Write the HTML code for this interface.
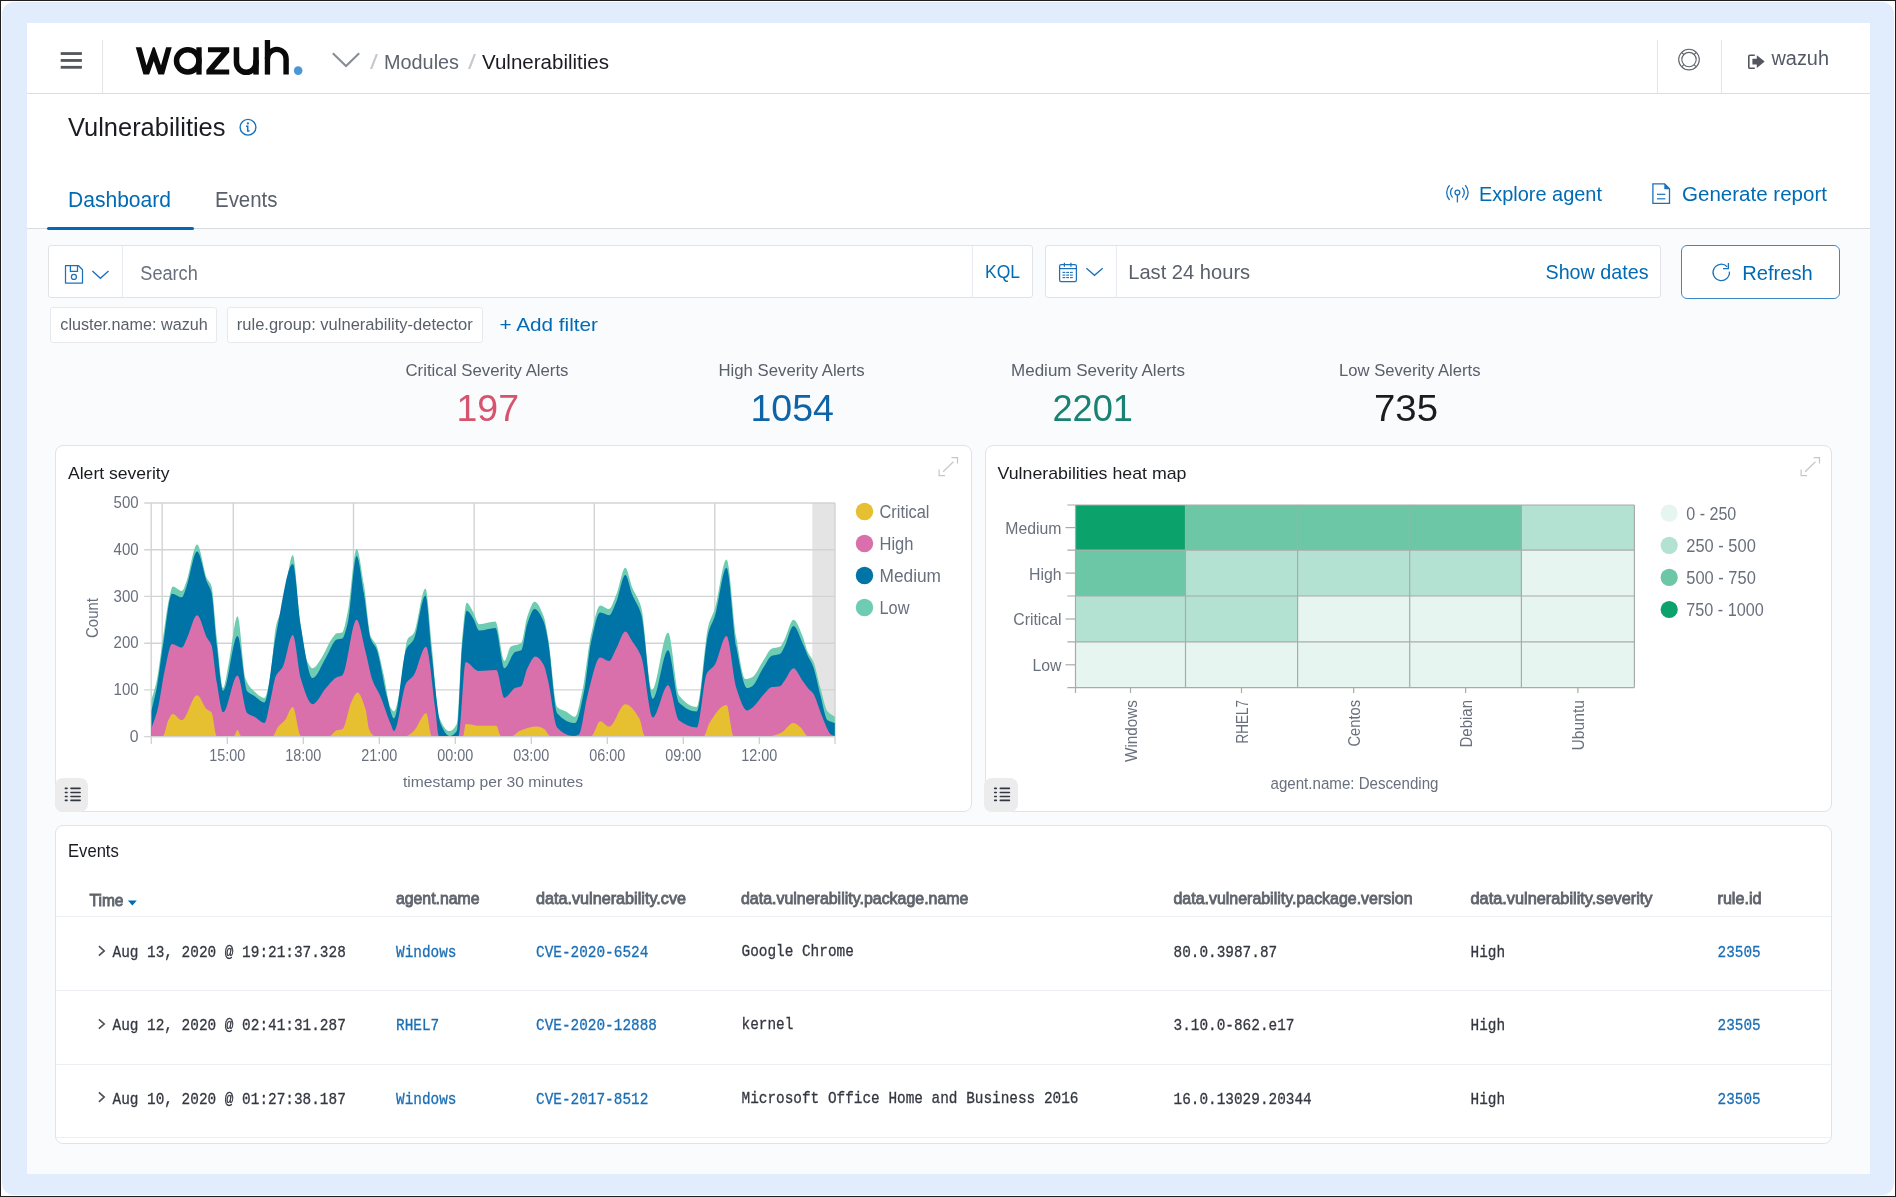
<!DOCTYPE html>
<html><head><meta charset="utf-8"><title>Wazuh - Vulnerabilities</title>
<style>
html,body{margin:0;padding:0;}
body{width:1896px;height:1197px;overflow:hidden;position:relative;background:#fff;font-family:"Liberation Sans", sans-serif;}
#L>div{position:absolute;}
svg{position:absolute;left:0;top:0;will-change:transform;}
</style></head><body>
<div id="L">
<div style="left:0px;top:0px;width:1896px;height:1197px;background:#ffffff;border:1px solid #1f1f1f;box-sizing:border-box;"></div>
<div style="left:2px;top:2px;width:1892px;height:1193px;background:#e1edfd;border-radius:12px;"></div>
<div style="left:27px;top:23px;width:1843px;height:1151px;background:#ffffff;"></div>
<div style="left:27px;top:229px;width:1843px;height:945px;background:#fafbfd;"></div>
<div style="left:27px;top:93px;width:1843px;height:1px;background:#dcdee1;"></div>
<div style="left:102px;top:40px;width:1px;height:53px;background:#e3e5e8;"></div>
<div style="left:1657px;top:40px;width:1px;height:53px;background:#e3e5e8;"></div>
<div style="left:1721px;top:40px;width:1px;height:53px;background:#e3e5e8;"></div>
<div style="left:27px;top:228px;width:1843px;height:1px;background:#d9dbde;"></div>
<div style="left:47px;top:227px;width:147px;height:3px;background:#006bb4;border-radius:2px;"></div>
<div style="left:48px;top:245px;width:985px;height:53px;background:#ffffff;border:1px solid #e1e3e6;box-sizing:border-box;border-radius:3px;"></div>
<div style="left:122px;top:246px;width:1px;height:51px;background:#e8ebef;"></div>
<div style="left:972px;top:246px;width:1px;height:51px;background:#e8ebef;"></div>
<div style="left:1045px;top:245px;width:616px;height:53px;background:#ffffff;border:1px solid #e1e3e6;box-sizing:border-box;border-radius:3px;"></div>
<div style="left:1116px;top:246px;width:1px;height:51px;background:#e8ebef;"></div>
<div style="left:1681px;top:245px;width:159px;height:54px;background:#ffffff;border:1.5px solid #3f87c6;box-sizing:border-box;border-radius:6px;"></div>
<div style="left:50px;top:307px;width:167px;height:36px;background:#ffffff;border:1px solid #e6e9ee;box-sizing:border-box;border-radius:3px;"></div>
<div style="left:227px;top:307px;width:256px;height:36px;background:#ffffff;border:1px solid #e6e9ee;box-sizing:border-box;border-radius:3px;"></div>
<div style="left:55px;top:445px;width:917px;height:367px;background:#ffffff;border:1px solid #dfe4ec;box-sizing:border-box;border-radius:8px;"></div>
<div style="left:985px;top:445px;width:847px;height:367px;background:#ffffff;border:1px solid #dfe4ec;box-sizing:border-box;border-radius:8px;"></div>
<div style="left:55px;top:825px;width:1777px;height:319px;background:#ffffff;border:1px solid #dfe4ec;box-sizing:border-box;border-radius:8px;"></div>
<div style="left:55px;top:778px;width:33px;height:34px;background:#ececed;border-radius:8px 8px 8px 8px;"></div>
<div style="left:984px;top:778px;width:34px;height:34px;background:#ececed;border-radius:8px 8px 8px 8px;"></div>
<div style="left:56px;top:916px;width:1775px;height:1px;background:#eceff3;"></div>
<div style="left:56px;top:990px;width:1775px;height:1px;background:#eceff3;"></div>
<div style="left:56px;top:1064px;width:1775px;height:1px;background:#eceff3;"></div>
<div style="left:56px;top:1137px;width:1775px;height:1px;background:#eceff3;"></div>
</div>
<svg font-family='"Liberation Sans", sans-serif' width="1896" height="1197" viewBox="0 0 1896 1197">
<text x="384" y="69.4" font-size="20" fill="#5e646f" textLength="75" lengthAdjust="spacingAndGlyphs">Modules</text>
<text x="482" y="69.4" font-size="20" fill="#1a1c21" textLength="127" lengthAdjust="spacingAndGlyphs">Vulnerabilities</text>
<text x="370" y="69.4" font-size="20" fill="#c5c9cf" textLength="8" lengthAdjust="spacingAndGlyphs">/</text>
<text x="468" y="69.4" font-size="20" fill="#c5c9cf" textLength="8" lengthAdjust="spacingAndGlyphs">/</text>
<text x="1771.5" y="65.4" font-size="20" fill="#535966" textLength="57.5" lengthAdjust="spacingAndGlyphs">wazuh</text>
<text x="68" y="136.4" font-size="25.5" fill="#1a1c21" textLength="157.5" lengthAdjust="spacingAndGlyphs">Vulnerabilities</text>
<text x="68" y="207.2" font-size="22" fill="#006bb4" textLength="103" lengthAdjust="spacingAndGlyphs">Dashboard</text>
<text x="215" y="207.2" font-size="22" fill="#5a606b" textLength="62.5" lengthAdjust="spacingAndGlyphs">Events</text>
<text x="1479" y="200.9" font-size="20.5" fill="#006bb4" textLength="123" lengthAdjust="spacingAndGlyphs">Explore agent</text>
<text x="1682" y="200.9" font-size="20.5" fill="#006bb4" textLength="145" lengthAdjust="spacingAndGlyphs">Generate report</text>
<text x="140.3" y="280.2" font-size="19.5" fill="#69707d" textLength="57.5" lengthAdjust="spacingAndGlyphs">Search</text>
<text x="985" y="278.4" font-size="19" fill="#006bb4" textLength="35" lengthAdjust="spacingAndGlyphs">KQL</text>
<text x="1128.2" y="279.4" font-size="19.8" fill="#5a606b" textLength="122" lengthAdjust="spacingAndGlyphs">Last 24 hours</text>
<text x="1545.5" y="279.4" font-size="19.8" fill="#006bb4" textLength="103" lengthAdjust="spacingAndGlyphs">Show dates</text>
<text x="1742.2" y="279.9" font-size="20.3" fill="#006bb4" textLength="70.5" lengthAdjust="spacingAndGlyphs">Refresh</text>
<text x="60.3" y="330.4" font-size="16.3" fill="#5a606b" textLength="147.5" lengthAdjust="spacingAndGlyphs">cluster.name: wazuh</text>
<text x="236.8" y="330.4" font-size="16.3" fill="#5a606b" textLength="236" lengthAdjust="spacingAndGlyphs">rule.group: vulnerability-detector</text>
<text x="499.5" y="331.4" font-size="19" fill="#006bb4" textLength="98.5" lengthAdjust="spacingAndGlyphs">+ Add filter</text>
<text x="405.5" y="376.0" font-size="17" fill="#5a606b" textLength="163" lengthAdjust="spacingAndGlyphs">Critical Severity Alerts</text>
<text x="456.5" y="420.7" font-size="37.5" fill="#d6546e" textLength="62.5" lengthAdjust="spacingAndGlyphs">197</text>
<text x="718.5" y="376.0" font-size="17" fill="#5a606b" textLength="146" lengthAdjust="spacingAndGlyphs">High Severity Alerts</text>
<text x="750.5" y="420.7" font-size="37.5" fill="#0f64a8" textLength="83.5" lengthAdjust="spacingAndGlyphs">1054</text>
<text x="1011" y="376.0" font-size="17" fill="#5a606b" textLength="174" lengthAdjust="spacingAndGlyphs">Medium Severity Alerts</text>
<text x="1052.5" y="420.7" font-size="37.5" fill="#1a8272" textLength="80.5" lengthAdjust="spacingAndGlyphs">2201</text>
<text x="1339" y="376.0" font-size="17" fill="#5a606b" textLength="141.5" lengthAdjust="spacingAndGlyphs">Low Severity Alerts</text>
<text x="1374" y="420.7" font-size="37.5" fill="#1a1c21" textLength="64" lengthAdjust="spacingAndGlyphs">735</text>
<text x="68" y="478.9" font-size="17" fill="#1a1c21" textLength="101.5" lengthAdjust="spacingAndGlyphs">Alert severity</text>
<text x="997.5" y="478.9" font-size="17" fill="#1a1c21" textLength="189" lengthAdjust="spacingAndGlyphs">Vulnerabilities heat map</text>
<text x="68" y="857.2" font-size="17.8" fill="#1a1c21" textLength="50.8" lengthAdjust="spacingAndGlyphs">Events</text>
<circle cx="864.5" cy="511.5" r="8.7" fill="#e7c031"/>
<text x="879.5" y="517.8" font-size="18" fill="#69707d" textLength="50" lengthAdjust="spacingAndGlyphs">Critical</text>
<circle cx="864.5" cy="543.5" r="8.7" fill="#d970ab"/>
<text x="879.5" y="549.8" font-size="18" fill="#69707d" textLength="34" lengthAdjust="spacingAndGlyphs">High</text>
<circle cx="864.5" cy="575.5" r="8.7" fill="#0074a6"/>
<text x="879.5" y="581.8" font-size="18" fill="#69707d" textLength="61.5" lengthAdjust="spacingAndGlyphs">Medium</text>
<circle cx="864.5" cy="607.5" r="8.7" fill="#6dccb1"/>
<text x="879.5" y="613.8" font-size="18" fill="#69707d" textLength="30" lengthAdjust="spacingAndGlyphs">Low</text>
<circle cx="1669.2" cy="513.2" r="8.6" fill="#e6f5f0"/>
<text x="1686.3" y="519.8" font-size="17.6" fill="#69707d" textLength="50" lengthAdjust="spacingAndGlyphs">0 - 250</text>
<circle cx="1669.2" cy="545.3000000000001" r="8.6" fill="#b3e1d2"/>
<text x="1686.3" y="551.9" font-size="17.6" fill="#69707d" textLength="69.5" lengthAdjust="spacingAndGlyphs">250 - 500</text>
<circle cx="1669.2" cy="577.4000000000001" r="8.6" fill="#6cc7a6"/>
<text x="1686.3" y="584.0" font-size="17.6" fill="#69707d" textLength="69.5" lengthAdjust="spacingAndGlyphs">500 - 750</text>
<circle cx="1669.2" cy="609.5" r="8.6" fill="#0ba36b"/>
<text x="1686.3" y="616.1" font-size="17.6" fill="#69707d" textLength="77.5" lengthAdjust="spacingAndGlyphs">750 - 1000</text>
<text x="89.5" y="906.4" font-size="16.3" fill="#5f646d" textLength="34" lengthAdjust="spacingAndGlyphs" stroke="#5f646d" stroke-width="0.85">Time</text>
<text x="396" y="903.9" font-size="16.3" fill="#5f646d" textLength="83.5" lengthAdjust="spacingAndGlyphs" stroke="#5f646d" stroke-width="0.85">agent.name</text>
<text x="536" y="903.9" font-size="16.3" fill="#5f646d" textLength="150" lengthAdjust="spacingAndGlyphs" stroke="#5f646d" stroke-width="0.85">data.vulnerability.cve</text>
<text x="741" y="903.9" font-size="16.3" fill="#5f646d" textLength="227.5" lengthAdjust="spacingAndGlyphs" stroke="#5f646d" stroke-width="0.85">data.vulnerability.package.name</text>
<text x="1173.5" y="903.9" font-size="16.3" fill="#5f646d" textLength="239" lengthAdjust="spacingAndGlyphs" stroke="#5f646d" stroke-width="0.85">data.vulnerability.package.version</text>
<text x="1470.5" y="903.9" font-size="16.3" fill="#5f646d" textLength="182" lengthAdjust="spacingAndGlyphs" stroke="#5f646d" stroke-width="0.85">data.vulnerability.severity</text>
<text x="1717.5" y="903.9" font-size="16.3" fill="#5f646d" textLength="44" lengthAdjust="spacingAndGlyphs" stroke="#5f646d" stroke-width="0.85">rule.id</text>
<path d="M127.9 900.4 L136.8 900.4 L132.35 905.4 Z" fill="#006bb4"/>
<path d="M98.9 946.1999999999999 L104.2 950.9 L98.9 955.6" fill="none" stroke="#4a4f57" stroke-width="1.6"/>
<text x="112.5" y="957.3" font-size="16.8" fill="#343741" font-family='"Liberation Mono", monospace' textLength="233.28" lengthAdjust="spacingAndGlyphs" stroke="#343741" stroke-width="0.3">Aug 13, 2020 @ 19:21:37.328</text>
<text x="396" y="957.3" font-size="16.8" fill="#1b6fb5" font-family='"Liberation Mono", monospace' textLength="60.48" lengthAdjust="spacingAndGlyphs" stroke="#1b6fb5" stroke-width="0.3">Windows</text>
<text x="536" y="957.3" font-size="16.8" fill="#1b6fb5" font-family='"Liberation Mono", monospace' textLength="112.32" lengthAdjust="spacingAndGlyphs" stroke="#1b6fb5" stroke-width="0.3">CVE-2020-6524</text>
<text x="741.5" y="956.3" font-size="16.8" fill="#343741" font-family='"Liberation Mono", monospace' textLength="112.32" lengthAdjust="spacingAndGlyphs" stroke="#343741" stroke-width="0.3">Google Chrome</text>
<text x="1173.5" y="957.3" font-size="16.8" fill="#343741" font-family='"Liberation Mono", monospace' textLength="103.68" lengthAdjust="spacingAndGlyphs" stroke="#343741" stroke-width="0.3">80.0.3987.87</text>
<text x="1470.5" y="957.3" font-size="16.8" fill="#343741" font-family='"Liberation Mono", monospace' textLength="34.56" lengthAdjust="spacingAndGlyphs" stroke="#343741" stroke-width="0.3">High</text>
<text x="1717.5" y="957.3" font-size="16.8" fill="#1b6fb5" font-family='"Liberation Mono", monospace' textLength="43.2" lengthAdjust="spacingAndGlyphs" stroke="#1b6fb5" stroke-width="0.3">23505</text>
<path d="M98.9 1019.3 L104.2 1024.0 L98.9 1028.7" fill="none" stroke="#4a4f57" stroke-width="1.6"/>
<text x="112.5" y="1030.4" font-size="16.8" fill="#343741" font-family='"Liberation Mono", monospace' textLength="233.28" lengthAdjust="spacingAndGlyphs" stroke="#343741" stroke-width="0.3">Aug 12, 2020 @ 02:41:31.287</text>
<text x="396" y="1030.4" font-size="16.8" fill="#1b6fb5" font-family='"Liberation Mono", monospace' textLength="43.2" lengthAdjust="spacingAndGlyphs" stroke="#1b6fb5" stroke-width="0.3">RHEL7</text>
<text x="536" y="1030.4" font-size="16.8" fill="#1b6fb5" font-family='"Liberation Mono", monospace' textLength="120.96" lengthAdjust="spacingAndGlyphs" stroke="#1b6fb5" stroke-width="0.3">CVE-2020-12888</text>
<text x="741.5" y="1029.4" font-size="16.8" fill="#343741" font-family='"Liberation Mono", monospace' textLength="51.84" lengthAdjust="spacingAndGlyphs" stroke="#343741" stroke-width="0.3">kernel</text>
<text x="1173.5" y="1030.4" font-size="16.8" fill="#343741" font-family='"Liberation Mono", monospace' textLength="120.96" lengthAdjust="spacingAndGlyphs" stroke="#343741" stroke-width="0.3">3.10.0-862.e17</text>
<text x="1470.5" y="1030.4" font-size="16.8" fill="#343741" font-family='"Liberation Mono", monospace' textLength="34.56" lengthAdjust="spacingAndGlyphs" stroke="#343741" stroke-width="0.3">High</text>
<text x="1717.5" y="1030.4" font-size="16.8" fill="#1b6fb5" font-family='"Liberation Mono", monospace' textLength="43.2" lengthAdjust="spacingAndGlyphs" stroke="#1b6fb5" stroke-width="0.3">23505</text>
<path d="M98.9 1092.3999999999999 L104.2 1097.1 L98.9 1101.8" fill="none" stroke="#4a4f57" stroke-width="1.6"/>
<text x="112.5" y="1103.5" font-size="16.8" fill="#343741" font-family='"Liberation Mono", monospace' textLength="233.28" lengthAdjust="spacingAndGlyphs" stroke="#343741" stroke-width="0.3">Aug 10, 2020 @ 01:27:38.187</text>
<text x="396" y="1103.5" font-size="16.8" fill="#1b6fb5" font-family='"Liberation Mono", monospace' textLength="60.48" lengthAdjust="spacingAndGlyphs" stroke="#1b6fb5" stroke-width="0.3">Windows</text>
<text x="536" y="1103.5" font-size="16.8" fill="#1b6fb5" font-family='"Liberation Mono", monospace' textLength="112.32" lengthAdjust="spacingAndGlyphs" stroke="#1b6fb5" stroke-width="0.3">CVE-2017-8512</text>
<text x="741.5" y="1102.5" font-size="16.8" fill="#343741" font-family='"Liberation Mono", monospace' textLength="336.96" lengthAdjust="spacingAndGlyphs" stroke="#343741" stroke-width="0.3">Microsoft Office Home and Business 2016</text>
<text x="1173.5" y="1103.5" font-size="16.8" fill="#343741" font-family='"Liberation Mono", monospace' textLength="138.24" lengthAdjust="spacingAndGlyphs" stroke="#343741" stroke-width="0.3">16.0.13029.20344</text>
<text x="1470.5" y="1103.5" font-size="16.8" fill="#343741" font-family='"Liberation Mono", monospace' textLength="34.56" lengthAdjust="spacingAndGlyphs" stroke="#343741" stroke-width="0.3">High</text>
<text x="1717.5" y="1103.5" font-size="16.8" fill="#1b6fb5" font-family='"Liberation Mono", monospace' textLength="43.2" lengthAdjust="spacingAndGlyphs" stroke="#1b6fb5" stroke-width="0.3">23505</text>
<clipPath id="cc"><rect x="151.3" y="480" width="683.7" height="256.6"/></clipPath>
<rect x="812.3" y="503" width="22.7" height="233.6" fill="#e4e4e4"/>
<line x1="144.2" y1="736.6" x2="835" y2="736.6" stroke="#d2d3d5" stroke-width="1.4"/>
<text x="138.6" y="741.7" font-size="15.8" fill="#69707d" text-anchor="end">0</text>
<line x1="144.2" y1="689.9" x2="835" y2="689.9" stroke="#d2d3d5" stroke-width="1.4"/>
<text x="138.6" y="694.98" font-size="15.8" fill="#69707d" text-anchor="end" textLength="25" lengthAdjust="spacingAndGlyphs">100</text>
<line x1="144.2" y1="643.2" x2="835" y2="643.2" stroke="#d2d3d5" stroke-width="1.4"/>
<text x="138.6" y="648.26" font-size="15.8" fill="#69707d" text-anchor="end" textLength="25" lengthAdjust="spacingAndGlyphs">200</text>
<line x1="144.2" y1="596.4" x2="835" y2="596.4" stroke="#d2d3d5" stroke-width="1.4"/>
<text x="138.6" y="601.54" font-size="15.8" fill="#69707d" text-anchor="end" textLength="25" lengthAdjust="spacingAndGlyphs">300</text>
<line x1="144.2" y1="549.7" x2="835" y2="549.7" stroke="#d2d3d5" stroke-width="1.4"/>
<text x="138.6" y="554.82" font-size="15.8" fill="#69707d" text-anchor="end" textLength="25" lengthAdjust="spacingAndGlyphs">400</text>
<line x1="144.2" y1="503.0" x2="835" y2="503.0" stroke="#d2d3d5" stroke-width="1.4"/>
<text x="138.6" y="508.1" font-size="15.8" fill="#69707d" text-anchor="end" textLength="25" lengthAdjust="spacingAndGlyphs">500</text>
<line x1="162.2" y1="503" x2="162.2" y2="736.6" stroke="#d2d3d5" stroke-width="1.4"/>
<line x1="233.3" y1="503" x2="233.3" y2="736.6" stroke="#d2d3d5" stroke-width="1.4"/>
<line x1="353.5" y1="503" x2="353.5" y2="736.6" stroke="#d2d3d5" stroke-width="1.4"/>
<line x1="474.2" y1="503" x2="474.2" y2="736.6" stroke="#d2d3d5" stroke-width="1.4"/>
<line x1="594.3" y1="503" x2="594.3" y2="736.6" stroke="#d2d3d5" stroke-width="1.4"/>
<line x1="714.8" y1="503" x2="714.8" y2="736.6" stroke="#d2d3d5" stroke-width="1.4"/>
<line x1="151.2" y1="503" x2="151.2" y2="736.6" stroke="#d2d3d5" stroke-width="1.4"/>
<line x1="835" y1="503" x2="835" y2="736.6" stroke="#d2d3d5" stroke-width="1.4"/>
<path clip-path="url(#cc)" d="M151.3 700.6 C153.1 694.0 154.9 689.3 156.7 680.8 C158.8 670.9 160.9 651.6 163.0 637.7 C165.1 624.1 167.1 606.8 169.2 598.2 C170.4 593.2 171.6 586.6 172.8 586.6 C175.8 586.6 178.8 591.0 181.8 591.0 C183.3 591.0 184.8 585.7 186.3 582.0 C189.9 573.2 193.5 544.4 197.1 544.4 C200.4 544.4 203.7 571.5 207.0 578.5 C208.5 581.6 209.9 581.7 211.4 585.7 C213.2 590.6 215.0 621.9 216.8 637.7 C218.9 656.1 221.0 688.0 223.1 688.0 C225.2 688.0 227.3 669.6 229.4 659.3 C232.1 646.1 234.8 616.2 237.5 616.2 C240.2 616.2 242.9 672.2 245.6 679.0 C248.0 684.9 250.3 687.5 252.7 689.8 C256.6 693.6 260.5 697.9 264.4 697.9 C266.5 697.9 268.6 685.2 270.7 673.7 C272.4 664.4 274.1 634.9 275.8 627.0 C278.2 615.8 280.6 614.4 283.0 605.4 C286.3 593.2 289.5 555.0 292.8 555.0 C295.2 555.0 297.6 603.0 300.0 619.8 C302.4 636.6 304.8 655.9 307.2 661.0 C309.0 664.8 310.8 668.3 312.6 668.3 C315.3 668.3 318.0 663.0 320.7 659.3 C324.3 654.4 327.8 644.5 331.4 639.5 C333.2 637.0 335.0 633.7 336.8 633.2 C338.6 632.7 340.4 632.9 342.2 632.4 C344.0 631.9 345.8 621.1 347.6 612.6 C350.6 598.5 353.6 548.9 356.6 548.9 C359.0 548.9 361.4 569.9 363.8 583.9 C366.2 597.9 368.6 630.9 371.0 636.8 C372.8 641.2 374.5 641.1 376.3 645.0 C378.7 650.2 381.1 663.3 383.5 673.7 C385.9 684.1 388.3 703.8 390.7 707.8 C391.8 709.6 392.9 711.4 394.0 711.4 C396.4 711.4 398.8 694.9 401.2 682.6 C403.3 672.0 405.3 643.1 407.4 639.5 C409.5 635.8 411.6 636.3 413.7 633.2 C417.6 627.4 421.5 588.4 425.4 588.4 C427.5 588.4 429.6 625.2 431.7 645.0 C434.1 667.6 436.5 710.7 438.9 716.7 C442.5 725.6 446.0 731.1 449.6 731.1 C452.0 731.1 454.4 728.7 456.8 724.0 C458.6 720.5 460.4 656.3 462.2 637.7 C463.7 622.2 465.2 602.7 466.7 602.7 C468.8 602.7 470.9 608.2 473.0 611.7 C475.1 615.2 477.2 624.3 479.3 624.3 C484.7 624.3 490.0 621.6 495.4 621.6 C498.4 621.6 501.4 661.0 504.4 661.0 C506.5 661.0 508.6 648.1 510.7 646.7 C514.2 644.4 517.7 645.5 521.2 643.0 C523.3 641.5 525.3 621.9 527.4 616.2 C529.8 609.6 532.2 601.8 534.6 601.8 C537.6 601.8 540.6 608.6 543.6 616.2 C545.1 620.0 546.6 629.1 548.1 637.7 C551.1 654.9 554.1 704.1 557.1 706.9 C560.1 709.7 563.0 709.8 566.0 711.4 C569.0 713.0 572.0 716.7 575.0 716.7 C577.4 716.7 579.8 702.3 582.2 691.6 C585.2 678.2 588.2 646.9 591.2 634.1 C594.2 621.3 597.2 605.4 600.2 605.4 C603.2 605.4 606.1 609.0 609.1 609.0 C611.5 609.0 613.9 600.3 616.3 594.6 C619.3 587.5 622.3 567.7 625.3 567.7 C627.6 567.7 629.9 581.8 632.2 587.5 C635.2 595.0 638.2 597.1 641.2 607.2 C644.8 619.2 648.3 689.8 651.9 689.8 C657.3 689.8 662.7 632.4 668.1 632.4 C671.7 632.4 675.3 690.7 678.9 695.2 C684.9 702.7 690.8 706.9 696.8 706.9 C700.7 706.9 704.6 639.2 708.5 625.2 C710.6 617.7 712.7 615.6 714.8 609.0 C718.7 596.8 722.6 559.6 726.5 559.6 C729.8 559.6 733.0 618.7 736.3 637.7 C739.3 655.1 742.3 679.0 745.3 679.0 C747.6 679.0 749.9 678.2 752.2 677.2 C755.8 675.7 759.4 666.2 763.0 661.0 C766.0 656.7 768.9 649.6 771.9 648.5 C774.6 647.5 777.3 647.8 780.0 646.7 C781.5 646.1 783.0 642.2 784.5 639.5 C787.5 634.0 790.5 619.8 793.5 619.8 C796.5 619.8 799.5 629.1 802.5 636.0 C804.3 640.1 806.0 648.2 807.8 652.0 C809.6 655.9 811.4 656.9 813.2 661.0 C815.6 666.4 818.0 679.6 820.4 688.0 C822.8 696.4 825.2 708.5 827.6 711.4 C830.0 714.3 832.4 714.9 834.8 716.7 L834.8 736.6 L151.3 736.6 Z" fill="#6dccb1"/>
<path clip-path="url(#cc)" d="M151.3 711.4 C153.1 703.6 154.9 697.5 156.7 688.0 C158.8 676.9 160.9 658.1 163.0 645.0 C166.0 626.3 169.0 593.7 172.0 593.7 C175.3 593.7 178.5 597.3 181.8 597.3 C183.3 597.3 184.8 591.3 186.3 587.5 C189.9 578.3 193.5 551.5 197.1 551.5 C200.4 551.5 203.7 573.5 207.0 582.0 C208.5 585.8 209.9 586.7 211.4 592.0 C213.2 598.5 215.0 629.9 216.8 645.0 C218.9 662.6 221.0 690.7 223.1 690.7 C227.9 690.7 232.7 636.0 237.5 636.0 C240.8 636.0 244.1 688.1 247.4 691.6 C249.8 694.1 252.1 694.5 254.5 696.0 C257.8 698.1 261.1 702.4 264.4 702.4 C268.2 702.4 272.0 654.8 275.8 636.0 C281.5 607.9 287.1 564.0 292.8 564.0 C295.5 564.0 298.2 611.7 300.9 627.0 C304.8 649.2 308.7 678.0 312.6 678.0 C317.1 678.0 321.5 664.6 326.0 657.5 C329.6 651.7 333.2 640.5 336.8 639.5 C338.6 639.0 340.4 639.2 342.2 638.6 C344.0 638.0 345.8 630.5 347.6 623.4 C350.6 611.6 353.6 556.0 356.6 556.0 C359.0 556.0 361.4 579.1 363.8 592.8 C366.2 606.5 368.6 633.2 371.0 639.5 C372.8 644.1 374.5 644.4 376.3 648.5 C379.9 656.9 383.5 683.9 387.1 697.0 C389.4 705.4 391.7 718.5 394.0 718.5 C398.2 718.5 402.3 656.6 406.5 648.5 C408.9 643.9 411.3 643.8 413.7 639.5 C417.6 632.5 421.5 595.5 425.4 595.5 C427.5 595.5 429.6 636.1 431.7 654.0 C434.7 679.5 437.7 717.1 440.7 724.0 C443.7 730.8 446.6 736.0 449.6 736.0 C452.0 736.0 454.4 734.3 456.8 731.0 C458.6 728.5 460.4 663.3 462.2 645.0 C463.7 629.7 465.2 610.8 466.7 610.8 C468.8 610.8 470.9 614.9 473.0 618.0 C475.1 621.1 477.2 630.6 479.3 630.6 C484.7 630.6 490.0 627.9 495.4 627.9 C498.4 627.9 501.4 668.3 504.4 668.3 C507.9 668.3 511.5 653.6 515.0 652.0 C517.1 651.1 519.1 651.4 521.2 650.3 C523.3 649.2 525.3 629.1 527.4 623.4 C529.8 616.8 532.2 609.0 534.6 609.0 C537.6 609.0 540.6 614.8 543.6 621.6 C545.1 625.0 546.6 633.1 548.1 641.3 C551.1 657.7 554.1 709.8 557.1 713.2 C563.1 720.0 569.0 723.0 575.0 723.0 C578.0 723.0 581.0 705.7 584.0 691.6 C586.4 680.3 588.8 652.0 591.2 641.3 C594.2 628.0 597.2 612.6 600.2 612.6 C603.2 612.6 606.1 615.3 609.1 615.3 C611.5 615.3 613.9 607.3 616.3 601.8 C619.3 594.9 622.3 574.9 625.3 574.9 C627.6 574.9 629.9 588.9 632.2 594.6 C635.2 602.1 638.2 604.5 641.2 614.4 C645.1 627.2 648.9 698.8 652.8 698.8 C657.9 698.8 663.0 650.3 668.1 650.3 C671.7 650.3 675.3 698.9 678.9 702.4 C684.9 708.2 690.8 711.4 696.8 711.4 C700.7 711.4 704.6 646.3 708.5 632.4 C710.6 624.9 712.7 622.7 714.8 616.2 C718.7 604.1 722.6 567.7 726.5 567.7 C729.8 567.7 733.0 629.7 736.3 646.7 C739.9 665.5 743.5 688.0 747.1 688.0 C748.8 688.0 750.5 687.1 752.2 686.2 C755.8 684.3 759.4 673.8 763.0 668.3 C766.0 663.8 768.9 656.8 771.9 655.7 C774.6 654.7 777.3 655.0 780.0 653.9 C781.5 653.3 783.0 649.5 784.5 646.7 C787.5 641.1 790.5 626.0 793.5 626.0 C796.5 626.0 799.5 636.6 802.5 643.0 C804.3 646.8 806.0 651.8 807.8 655.7 C809.6 659.6 811.4 661.8 813.2 666.5 C815.6 672.8 818.0 686.3 820.4 695.2 C822.8 704.1 825.2 718.7 827.6 720.3 C830.0 721.9 832.4 722.1 834.8 723.0 L834.8 736.6 L151.3 736.6 Z" fill="#0074a6"/>
<path clip-path="url(#cc)" d="M151.3 729.0 C153.4 722.5 155.5 717.8 157.6 709.6 C160.0 700.2 162.4 680.5 164.8 670.0 C167.2 659.5 169.6 644.0 172.0 644.0 C175.3 644.0 178.5 647.6 181.8 647.6 C183.6 647.6 185.4 641.3 187.2 637.7 C190.5 631.1 193.8 615.3 197.1 615.3 C200.4 615.3 203.7 631.5 207.0 637.7 C208.5 640.5 209.9 641.2 211.4 645.0 C213.2 649.7 215.0 672.4 216.8 682.6 C218.9 694.5 221.0 712.3 223.1 712.3 C227.9 712.3 232.7 675.4 237.5 675.4 C240.8 675.4 244.1 710.4 247.4 713.2 C249.8 715.2 252.1 715.4 254.5 716.7 C257.8 718.5 261.1 723.0 264.4 723.0 C266.4 723.0 268.4 708.8 270.4 700.6 C272.2 693.2 274.0 680.2 275.8 676.3 C278.2 671.2 280.6 671.0 283.0 666.5 C286.3 660.4 289.5 635.0 292.8 635.0 C295.5 635.0 298.2 670.4 300.9 679.0 C304.8 691.4 308.7 704.2 312.6 704.2 C317.1 704.2 321.5 692.9 326.0 688.0 C329.6 684.1 333.2 678.9 336.8 677.2 C338.6 676.3 340.4 676.4 342.2 675.4 C347.0 672.8 351.8 619.8 356.6 619.8 C359.6 619.8 362.6 640.6 365.6 652.0 C368.0 661.0 370.3 674.5 372.7 680.8 C375.1 687.2 377.5 689.8 379.9 695.2 C383.5 703.4 387.1 715.7 390.7 724.0 C391.8 726.5 392.9 731.0 394.0 731.0 C398.2 731.0 402.3 688.9 406.5 682.6 C408.9 679.0 411.3 678.6 413.7 675.4 C417.8 669.9 421.9 646.7 426.0 646.7 C429.1 646.7 432.2 687.7 435.3 709.6 C436.5 718.1 437.7 736.0 438.9 736.0 C445.5 736.0 452.0 736.0 458.6 736.0 C461.0 736.0 463.4 662.0 465.8 662.0 C470.0 662.0 474.2 671.0 478.4 671.0 C484.4 671.0 490.3 670.0 496.3 670.0 C499.0 670.0 501.7 697.9 504.4 697.9 C507.9 697.9 511.5 689.5 515.0 688.0 C517.1 687.1 519.1 687.3 521.2 686.2 C523.3 685.1 525.3 672.3 527.4 668.3 C530.1 663.0 532.8 656.6 535.5 656.6 C538.2 656.6 540.9 660.2 543.6 664.7 C545.1 667.2 546.6 674.6 548.1 680.8 C551.1 693.3 554.1 724.4 557.1 727.5 C562.5 733.1 567.8 736.0 573.2 736.0 C575.0 736.0 576.8 735.5 578.6 734.7 C581.6 733.4 584.6 706.0 587.6 695.2 C591.8 680.1 596.0 657.5 600.2 657.5 C603.2 657.5 606.1 661.0 609.1 661.0 C611.5 661.0 613.9 652.8 616.3 648.5 C619.3 643.1 622.3 631.5 625.3 631.5 C627.6 631.5 629.9 637.8 632.2 641.3 C635.2 645.9 638.2 649.1 641.2 656.6 C645.1 666.3 648.9 717.6 652.8 717.6 C657.9 717.6 663.0 685.3 668.1 685.3 C671.7 685.3 675.3 717.5 678.9 720.3 C684.9 724.9 690.8 727.5 696.8 727.5 C700.1 727.5 703.4 679.7 706.7 673.7 C709.4 668.8 712.1 668.7 714.8 664.7 C718.7 658.9 722.6 636.0 726.5 636.0 C729.8 636.0 733.0 678.2 736.3 688.0 C739.9 698.8 743.5 710.5 747.1 710.5 C748.8 710.5 750.5 709.0 752.2 707.8 C755.8 705.3 759.4 698.9 763.0 695.2 C766.0 692.2 768.9 687.7 771.9 687.1 C774.6 686.6 777.3 686.8 780.0 686.2 C781.5 685.9 783.0 682.7 784.5 680.8 C787.5 677.0 790.5 668.3 793.5 668.3 C796.5 668.3 799.5 676.8 802.5 680.8 C804.6 683.6 806.6 686.6 808.7 688.9 C810.2 690.6 811.7 691.3 813.2 693.4 C816.2 697.5 819.2 709.9 822.2 716.7 C825.2 723.5 828.2 733.0 831.2 734.7 C832.4 735.4 833.6 735.6 834.8 736.0 L834.8 736.6 L151.3 736.6 Z" fill="#d970ab"/>
<path clip-path="url(#cc)" d="M151.3 736.0 C155.2 736.0 159.1 736.0 163.0 736.0 C164.8 736.0 166.5 723.6 168.3 720.3 C169.8 717.5 171.3 714.0 172.8 714.0 C175.8 714.0 178.8 720.3 181.8 720.3 C186.9 720.3 192.0 695.2 197.1 695.2 C200.4 695.2 203.7 706.9 207.0 709.6 C208.5 710.8 209.9 710.8 211.4 712.3 C213.2 714.2 215.0 736.0 216.8 736.0 C222.5 736.0 228.3 736.0 234.0 736.0 C235.2 736.0 236.3 730.0 237.5 730.0 C238.7 730.0 239.8 736.0 241.0 736.0 C251.7 736.0 262.3 736.0 273.0 736.0 C274.5 736.0 276.1 729.5 277.6 727.5 C280.0 724.3 282.4 723.3 284.8 720.3 C287.5 717.0 290.1 706.9 292.8 706.9 C295.5 706.9 298.2 736.0 300.9 736.0 C310.5 736.0 320.0 736.0 329.6 736.0 C332.0 736.0 334.4 730.8 336.8 730.2 C338.6 729.7 340.4 729.8 342.2 729.3 C345.2 728.4 348.2 708.5 351.2 702.4 C353.3 698.2 355.4 692.5 357.5 692.5 C360.2 692.5 362.9 700.8 365.6 709.6 C366.8 713.4 367.9 726.8 369.1 729.3 C370.9 733.1 372.7 736.0 374.5 736.0 C385.2 736.0 395.8 736.0 406.5 736.0 C408.9 736.0 411.3 733.2 413.7 731.0 C417.9 727.2 422.1 713.2 426.3 713.2 C428.1 713.2 429.9 736.0 431.7 736.0 C442.2 736.0 452.6 736.0 463.1 736.0 C464.0 736.0 464.9 724.0 465.8 724.0 C470.0 724.0 474.2 725.7 478.4 725.7 C484.4 725.7 490.3 725.7 496.3 725.7 C497.8 725.7 499.3 736.0 500.8 736.0 C504.6 736.0 508.4 736.0 512.2 736.0 C514.6 736.0 517.0 731.9 519.4 731.0 C525.4 728.7 531.3 726.6 537.3 726.6 C539.7 726.6 542.1 727.9 544.5 729.3 C546.3 730.4 548.1 736.0 549.9 736.0 C563.7 736.0 577.4 736.0 591.2 736.0 C594.2 736.0 597.2 721.2 600.2 721.2 C603.2 721.2 606.1 726.6 609.1 726.6 C614.5 726.6 619.9 704.2 625.3 704.2 C630.0 704.2 634.7 710.6 639.4 718.5 C641.2 721.5 643.0 736.0 644.8 736.0 C664.5 736.0 684.3 736.0 704.0 736.0 C705.8 736.0 707.6 725.8 709.4 723.0 C715.1 714.0 720.8 705.0 726.5 705.0 C728.9 705.0 731.2 736.0 733.6 736.0 C745.8 736.0 757.9 736.0 770.1 736.0 C773.7 736.0 777.3 734.5 780.9 733.0 C785.1 731.3 789.3 723.0 793.5 723.0 C795.9 723.0 798.3 725.5 800.7 727.5 C803.1 729.4 805.4 736.0 807.8 736.0 C816.8 736.0 825.8 736.0 834.8 736.0 L834.8 736.6 L151.3 736.6 Z" fill="#e7c031"/>
<line x1="151.2" y1="736.6" x2="835" y2="736.6" stroke="#d2d3d5" stroke-width="1.4"/>
<line x1="151.3" y1="736.6" x2="151.3" y2="744" stroke="#d2d3d5" stroke-width="1.4"/>
<line x1="227.3" y1="736.6" x2="227.3" y2="744" stroke="#d2d3d5" stroke-width="1.4"/>
<text x="227.3" y="761.0" font-size="16" fill="#69707d" text-anchor="middle" textLength="36" lengthAdjust="spacingAndGlyphs">15:00</text>
<line x1="303.3" y1="736.6" x2="303.3" y2="744" stroke="#d2d3d5" stroke-width="1.4"/>
<text x="303.3" y="761.0" font-size="16" fill="#69707d" text-anchor="middle" textLength="36" lengthAdjust="spacingAndGlyphs">18:00</text>
<line x1="379.3" y1="736.6" x2="379.3" y2="744" stroke="#d2d3d5" stroke-width="1.4"/>
<text x="379.3" y="761.0" font-size="16" fill="#69707d" text-anchor="middle" textLength="36" lengthAdjust="spacingAndGlyphs">21:00</text>
<line x1="455.3" y1="736.6" x2="455.3" y2="744" stroke="#d2d3d5" stroke-width="1.4"/>
<text x="455.3" y="761.0" font-size="16" fill="#69707d" text-anchor="middle" textLength="36" lengthAdjust="spacingAndGlyphs">00:00</text>
<line x1="531.3" y1="736.6" x2="531.3" y2="744" stroke="#d2d3d5" stroke-width="1.4"/>
<text x="531.3" y="761.0" font-size="16" fill="#69707d" text-anchor="middle" textLength="36" lengthAdjust="spacingAndGlyphs">03:00</text>
<line x1="607.3" y1="736.6" x2="607.3" y2="744" stroke="#d2d3d5" stroke-width="1.4"/>
<text x="607.3" y="761.0" font-size="16" fill="#69707d" text-anchor="middle" textLength="36" lengthAdjust="spacingAndGlyphs">06:00</text>
<line x1="683.3" y1="736.6" x2="683.3" y2="744" stroke="#d2d3d5" stroke-width="1.4"/>
<text x="683.3" y="761.0" font-size="16" fill="#69707d" text-anchor="middle" textLength="36" lengthAdjust="spacingAndGlyphs">09:00</text>
<line x1="759.3" y1="736.6" x2="759.3" y2="744" stroke="#d2d3d5" stroke-width="1.4"/>
<text x="759.3" y="761.0" font-size="16" fill="#69707d" text-anchor="middle" textLength="36" lengthAdjust="spacingAndGlyphs">12:00</text>
<line x1="835.0" y1="736.6" x2="835.0" y2="744" stroke="#d2d3d5" stroke-width="1.4"/>
<text transform="translate(97.8,618) rotate(-90)" text-anchor="middle" font-size="16.5" fill="#69707d" textLength="40" lengthAdjust="spacingAndGlyphs">Count</text>
<text x="403" y="787.1" font-size="15.5" fill="#69707d" textLength="180" lengthAdjust="spacingAndGlyphs">timestamp per 30 minutes</text>
<rect x="1075.5" y="505" width="110.0" height="45.2" fill="#0ba36b"/>
<rect x="1185.5" y="505" width="112.1" height="45.2" fill="#6cc7a6"/>
<rect x="1297.6" y="505" width="112.1" height="45.2" fill="#6cc7a6"/>
<rect x="1409.7" y="505" width="111.7" height="45.2" fill="#6cc7a6"/>
<rect x="1521.4" y="505" width="113.0" height="45.2" fill="#b3e1d2"/>
<rect x="1075.5" y="550.2" width="110.0" height="45.8" fill="#6cc7a6"/>
<rect x="1185.5" y="550.2" width="112.1" height="45.8" fill="#b3e1d2"/>
<rect x="1297.6" y="550.2" width="112.1" height="45.8" fill="#b3e1d2"/>
<rect x="1409.7" y="550.2" width="111.7" height="45.8" fill="#b3e1d2"/>
<rect x="1521.4" y="550.2" width="113.0" height="45.8" fill="#e6f5f0"/>
<rect x="1075.5" y="596" width="110.0" height="45.9" fill="#b3e1d2"/>
<rect x="1185.5" y="596" width="112.1" height="45.9" fill="#b3e1d2"/>
<rect x="1297.6" y="596" width="112.1" height="45.9" fill="#e6f5f0"/>
<rect x="1409.7" y="596" width="111.7" height="45.9" fill="#e6f5f0"/>
<rect x="1521.4" y="596" width="113.0" height="45.9" fill="#e6f5f0"/>
<rect x="1075.5" y="641.9" width="110.0" height="45.7" fill="#e6f5f0"/>
<rect x="1185.5" y="641.9" width="112.1" height="45.7" fill="#e6f5f0"/>
<rect x="1297.6" y="641.9" width="112.1" height="45.7" fill="#e6f5f0"/>
<rect x="1409.7" y="641.9" width="111.7" height="45.7" fill="#e6f5f0"/>
<rect x="1521.4" y="641.9" width="113.0" height="45.7" fill="#e6f5f0"/>
<line x1="1075.5" y1="505" x2="1075.5" y2="687.6" stroke="#a9aaab" stroke-width="1.2"/>
<line x1="1185.5" y1="505" x2="1185.5" y2="687.6" stroke="#a9aaab" stroke-width="1.2"/>
<line x1="1297.6" y1="505" x2="1297.6" y2="687.6" stroke="#a9aaab" stroke-width="1.2"/>
<line x1="1409.7" y1="505" x2="1409.7" y2="687.6" stroke="#a9aaab" stroke-width="1.2"/>
<line x1="1521.4" y1="505" x2="1521.4" y2="687.6" stroke="#a9aaab" stroke-width="1.2"/>
<line x1="1634.4" y1="505" x2="1634.4" y2="687.6" stroke="#a9aaab" stroke-width="1.2"/>
<line x1="1067.4" y1="505" x2="1634.4" y2="505" stroke="#a9aaab" stroke-width="1.2"/>
<line x1="1067.4" y1="550.2" x2="1634.4" y2="550.2" stroke="#a9aaab" stroke-width="1.2"/>
<line x1="1067.4" y1="596" x2="1634.4" y2="596" stroke="#a9aaab" stroke-width="1.2"/>
<line x1="1067.4" y1="641.9" x2="1634.4" y2="641.9" stroke="#a9aaab" stroke-width="1.2"/>
<line x1="1067.4" y1="687.6" x2="1634.4" y2="687.6" stroke="#a9aaab" stroke-width="1.2"/>
<line x1="1065.5" y1="527.6" x2="1075.5" y2="527.6" stroke="#a9aaab" stroke-width="1.2"/>
<text x="1061.5" y="534.0" font-size="15.8" fill="#69707d" text-anchor="end">Medium</text>
<line x1="1065.5" y1="573.1" x2="1075.5" y2="573.1" stroke="#a9aaab" stroke-width="1.2"/>
<text x="1061.5" y="579.5" font-size="15.8" fill="#69707d" text-anchor="end">High</text>
<line x1="1065.5" y1="619.0" x2="1075.5" y2="619.0" stroke="#a9aaab" stroke-width="1.2"/>
<text x="1061.5" y="625.4" font-size="15.8" fill="#69707d" text-anchor="end">Critical</text>
<line x1="1065.5" y1="664.8" x2="1075.5" y2="664.8" stroke="#a9aaab" stroke-width="1.2"/>
<text x="1061.5" y="671.2" font-size="15.8" fill="#69707d" text-anchor="end">Low</text>
<line x1="1075.5" y1="687.6" x2="1075.5" y2="693" stroke="#a9aaab" stroke-width="1.2"/>
<line x1="1130.5" y1="687.6" x2="1130.5" y2="693" stroke="#a9aaab" stroke-width="1.2"/>
<text transform="translate(1136.5,700) rotate(-90)" text-anchor="end" font-size="15.8" fill="#69707d" textLength="62" lengthAdjust="spacingAndGlyphs">Windows</text>
<line x1="1241.5" y1="687.6" x2="1241.5" y2="693" stroke="#a9aaab" stroke-width="1.2"/>
<text transform="translate(1247.5,700) rotate(-90)" text-anchor="end" font-size="15.8" fill="#69707d" textLength="43.5" lengthAdjust="spacingAndGlyphs">RHEL7</text>
<line x1="1353.7" y1="687.6" x2="1353.7" y2="693" stroke="#a9aaab" stroke-width="1.2"/>
<text transform="translate(1359.7,700) rotate(-90)" text-anchor="end" font-size="15.8" fill="#69707d" textLength="46.5" lengthAdjust="spacingAndGlyphs">Centos</text>
<line x1="1465.6" y1="687.6" x2="1465.6" y2="693" stroke="#a9aaab" stroke-width="1.2"/>
<text transform="translate(1471.6,700) rotate(-90)" text-anchor="end" font-size="15.8" fill="#69707d" textLength="47.5" lengthAdjust="spacingAndGlyphs">Debian</text>
<line x1="1577.9" y1="687.6" x2="1577.9" y2="693" stroke="#a9aaab" stroke-width="1.2"/>
<text transform="translate(1583.9,700) rotate(-90)" text-anchor="end" font-size="15.8" fill="#69707d" textLength="50.5" lengthAdjust="spacingAndGlyphs">Ubuntu</text>
<text x="1270.5" y="788.7" font-size="16.3" fill="#69707d" textLength="168" lengthAdjust="spacingAndGlyphs">agent.name: Descending</text>
<rect x="60.7" y="52.15" width="21.2" height="2.8" fill="#53565d"/>
<rect x="60.7" y="59.050000000000004" width="21.2" height="2.8" fill="#53565d"/>
<rect x="60.7" y="65.89999999999999" width="21.2" height="2.8" fill="#53565d"/>
<g transform="translate(125,30) scale(0.10021)"><clipPath id="lc"><rect x="0" y="172" width="1700" height="273"/></clipPath><polyline clip-path="url(#lc)" points="121,120 212,445 287,228 362,445 453,120" fill="none" stroke="#0a0a0a" stroke-width="54" stroke-linejoin="miter" stroke-miterlimit="10"/><circle cx="626" cy="308" r="112" fill="none" stroke="#0a0a0a" stroke-width="55"/><rect x="712" y="172" width="53" height="273" fill="#0a0a0a"/><path d="M828 172 H1040 V222 L890 395 H1040 V445 H812 V398 L962 222 H828 Z" fill="#0a0a0a"/><path d="M1112.5 172 V325 A97.5 97.5 0 0 0 1307.5 325 V172" fill="none" stroke="#0a0a0a" stroke-width="55"/><rect x="1280" y="300" width="55" height="145" fill="#0a0a0a"/><rect x="1395" y="100" width="53" height="345" fill="#0a0a0a"/><path d="M1421.5 286 A93 93 0 0 1 1607.5 286 V445" fill="none" stroke="#0a0a0a" stroke-width="54"/><circle cx="1728" cy="405" r="43" fill="#4c96d7"/></g>
<polyline points="332.8,53.3 346,66 359.2,53.3" fill="none" stroke="#868c95" stroke-width="2"/>
<g fill="none" stroke="#5e6269" stroke-width="1.1"><circle cx="1689" cy="59.6" r="10.3"/><circle cx="1689" cy="59.6" r="7.2"/><line x1="1683.9" y1="54.5" x2="1681.7" y2="52.3"/><line x1="1694.1" y1="54.5" x2="1696.3" y2="52.3"/><line x1="1683.9" y1="64.7" x2="1681.7" y2="66.9"/><line x1="1694.1" y1="64.7" x2="1696.3" y2="66.9"/></g>
<path d="M1754.8 55.3 H1750 Q1748.8 55.3 1748.8 56.5 V67.2 Q1748.8 68.3 1750 68.3 H1754.8" fill="none" stroke="#53565d" stroke-width="1.6"/><path d="M1752.4 58.8 H1756.8 V55.3 L1764.7 61.6 L1756.8 67.9 V64.4 H1752.4 Z" fill="#53565d"/>
<g stroke="#1a72bb" fill="none"><circle cx="248" cy="127.25" r="7.9" stroke-width="1.4"/><path d="M246 126.3 H247.7 V131 H249.5" stroke-width="1.5"/></g><circle cx="247.9" cy="123.4" r="1.1" fill="#1a72bb"/>
<g stroke="#1a72bb" fill="none" stroke-width="1.3"><circle cx="1457.4" cy="192.6" r="2.4"/><line x1="1457.4" y1="195" x2="1457.4" y2="202.4"/><path d="M1452.6 187.6 A7 7 0 0 0 1452.6 197.6"/><path d="M1462.2 187.6 A7 7 0 0 1 1462.2 197.6"/><path d="M1449.6 185.2 A10.8 10.8 0 0 0 1449.6 200"/><path d="M1465.2 185.2 A10.8 10.8 0 0 1 1465.2 200"/></g>
<path d="M1652.9 183.8 H1664.6 L1669.5 188.7 V203.3 H1652.9 Z" fill="none" stroke="#1a72bb" stroke-width="1.3"/><path d="M1664.3 183.5 L1670 189.2 H1664.3 Z" fill="#1a72bb"/><line x1="1657" y1="194.3" x2="1665.3" y2="194.3" stroke="#1a72bb" stroke-width="1.2"/><line x1="1657" y1="198.8" x2="1665.3" y2="198.8" stroke="#1a72bb" stroke-width="1.2"/>
<g fill="none" stroke="#1b72bb" stroke-width="1.25"><path d="M65.5 265.5 H78.3 L82.5 269.8 V283 H65.5 Z" stroke-linejoin="round"/><path d="M70.4 265.5 V271.3 H77.5 V265.5"/><circle cx="73.9" cy="276.9" r="2.5"/><polyline points="92.4,271.1 100.4,278.3 108.5,271.1" stroke-width="1.35"/></g>
<g fill="none" stroke="#1b72bb" stroke-width="1.25"><rect x="1059.6" y="264.6" width="16.8" height="17.1" rx="1.6"/><line x1="1059.6" y1="268.6" x2="1076.4" y2="268.6"/><line x1="1064.4" y1="262.8" x2="1064.4" y2="266.8"/><line x1="1070.9" y1="262.8" x2="1070.9" y2="266.8"/><polyline points="1086.4,268.3 1094.5,275.3 1102.7,268.3" stroke-width="1.35"/></g>
<rect x="1062.5" y="271.84999999999997" width="2.8" height="1.1" fill="#1b72bb"/>
<rect x="1066.1999999999998" y="271.84999999999997" width="2.8" height="1.1" fill="#1b72bb"/>
<rect x="1070.0" y="271.84999999999997" width="2.8" height="1.1" fill="#1b72bb"/>
<rect x="1062.5" y="274.55" width="2.8" height="1.1" fill="#1b72bb"/>
<rect x="1066.1999999999998" y="274.55" width="2.8" height="1.1" fill="#1b72bb"/>
<rect x="1070.0" y="274.55" width="2.8" height="1.1" fill="#1b72bb"/>
<rect x="1062.5" y="277.05" width="2.8" height="1.1" fill="#1b72bb"/>
<rect x="1066.1999999999998" y="277.05" width="2.8" height="1.1" fill="#1b72bb"/>
<rect x="1070.0" y="277.05" width="2.8" height="1.1" fill="#1b72bb"/>
<g fill="none" stroke="#1b72bb" stroke-width="1.3"><path d="M1729.4 271.6 A8.2 8.2 0 1 1 1727.2 266.8"/><polyline points="1728.4,263 1728.4,268.6 1723,268.6"/></g>
<g fill="none" stroke="#c4c6ca" stroke-width="1.2"><polyline points="951.5,457.6 957.5,457.6 957.5,463.6"/><polyline points="939.1,469.6 939.1,475.6 945.1,475.6"/><line x1="953.4" y1="461.8" x2="943.1" y2="471.7"/></g>
<g fill="none" stroke="#c4c6ca" stroke-width="1.2"><polyline points="1813.5,457.6 1819.5,457.6 1819.5,463.6"/><polyline points="1801.1,469.6 1801.1,475.6 1807.1,475.6"/><line x1="1815.4" y1="461.8" x2="1805.1" y2="471.7"/></g>
<line x1="65.4" y1="788.4" x2="67.0" y2="788.4" stroke="#343741" stroke-width="1.6" stroke-linecap="round"/><line x1="71.0" y1="788.4" x2="80.10000000000001" y2="788.4" stroke="#343741" stroke-width="1.6" stroke-linecap="round"/>
<line x1="65.4" y1="792.5" x2="67.0" y2="792.5" stroke="#343741" stroke-width="1.6" stroke-linecap="round"/><line x1="71.0" y1="792.5" x2="80.10000000000001" y2="792.5" stroke="#343741" stroke-width="1.6" stroke-linecap="round"/>
<line x1="65.4" y1="796.5" x2="67.0" y2="796.5" stroke="#343741" stroke-width="1.6" stroke-linecap="round"/><line x1="71.0" y1="796.5" x2="80.10000000000001" y2="796.5" stroke="#343741" stroke-width="1.6" stroke-linecap="round"/>
<line x1="65.4" y1="800.4" x2="67.0" y2="800.4" stroke="#343741" stroke-width="1.6" stroke-linecap="round"/><line x1="71.0" y1="800.4" x2="80.10000000000001" y2="800.4" stroke="#343741" stroke-width="1.6" stroke-linecap="round"/>
<line x1="994.7" y1="788.4" x2="996.3" y2="788.4" stroke="#343741" stroke-width="1.6" stroke-linecap="round"/><line x1="1000.3" y1="788.4" x2="1009.4" y2="788.4" stroke="#343741" stroke-width="1.6" stroke-linecap="round"/>
<line x1="994.7" y1="792.5" x2="996.3" y2="792.5" stroke="#343741" stroke-width="1.6" stroke-linecap="round"/><line x1="1000.3" y1="792.5" x2="1009.4" y2="792.5" stroke="#343741" stroke-width="1.6" stroke-linecap="round"/>
<line x1="994.7" y1="796.5" x2="996.3" y2="796.5" stroke="#343741" stroke-width="1.6" stroke-linecap="round"/><line x1="1000.3" y1="796.5" x2="1009.4" y2="796.5" stroke="#343741" stroke-width="1.6" stroke-linecap="round"/>
<line x1="994.7" y1="800.4" x2="996.3" y2="800.4" stroke="#343741" stroke-width="1.6" stroke-linecap="round"/><line x1="1000.3" y1="800.4" x2="1009.4" y2="800.4" stroke="#343741" stroke-width="1.6" stroke-linecap="round"/>
</svg>
</body></html>
